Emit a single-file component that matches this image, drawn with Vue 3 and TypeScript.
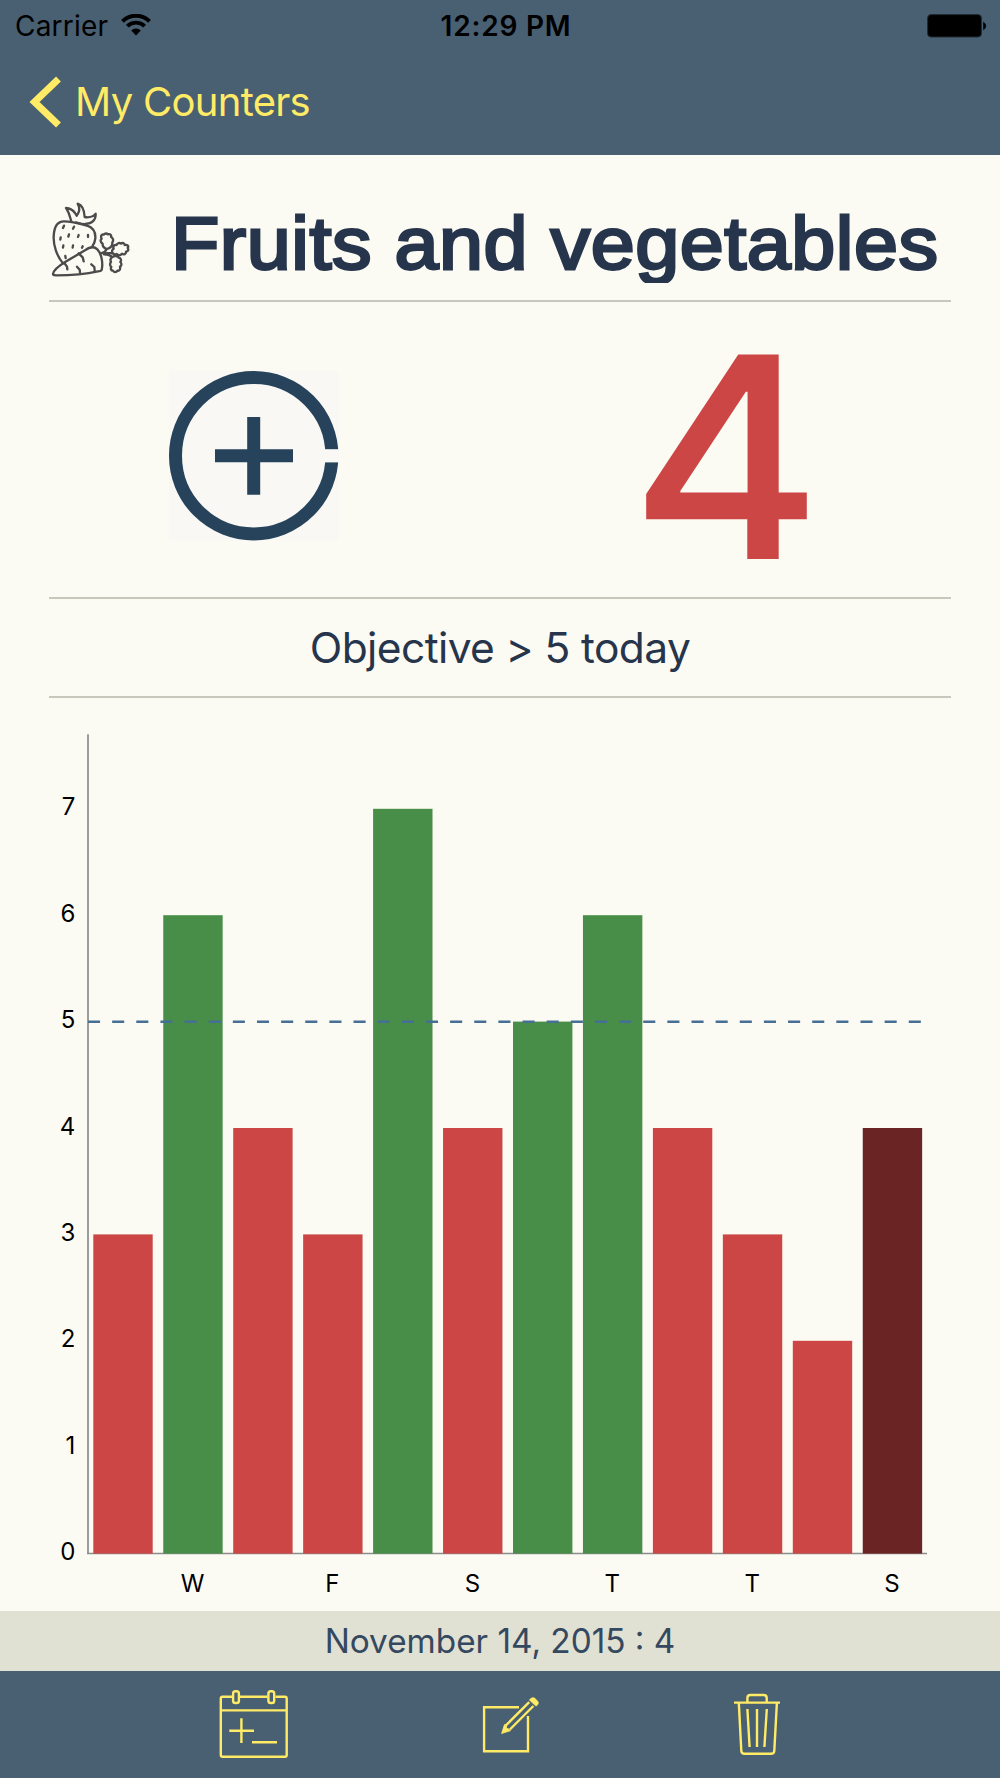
<script setup lang="ts">
interface Day {
  label: string
  value: number
}

const objective = 5

const days: Day[] = [
  { label: '', value: 3 },
  { label: 'W', value: 6 },
  { label: '', value: 4 },
  { label: 'F', value: 3 },
  { label: '', value: 7 },
  { label: 'S', value: 4 },
  { label: '', value: 5 },
  { label: 'T', value: 6 },
  { label: '', value: 4 },
  { label: 'T', value: 3 },
  { label: '', value: 2 },
  { label: 'S', value: 4 },
]

const unit = 106.4
const baseline = 855.3
const pitch = 69.95
const barWidth = 59.4
const firstBar = 93.3

const ticks = [0, 1, 2, 3, 4, 5, 6, 7]

const yOf = (value: number): number => baseline - value * unit
const xOf = (index: number): number => firstBar + index * pitch

function barClass(day: Day, index: number): string {
  if (index === days.length - 1) return 'today'
  return day.value >= objective ? 'reached' : 'missed'
}
</script>

<template>
  <div class="screen">
    <header class="top">
      <div class="status">
        <div class="carrier">
          <span>Carrier</span>
          <svg class="wifi" width="30" height="22" viewBox="0 0 30 22">
            <path d="M1.500 7.300A19.200 19.200 0 0 1 28.500 7.300" fill="none" stroke="#000" stroke-width="4" />
            <path d="M6.300 12.200A12.400 12.400 0 0 1 23.700 12.200" fill="none" stroke="#000" stroke-width="3.800" />
            <path d="M10.200 16.400A7 7 0 0 1 19.800 16.400L15 21.500Z" fill="#000" />
          </svg>
        </div>
        <div class="time">12:29 PM</div>
        <div class="battery-wrap">
          <svg width="60" height="24" viewBox="0 0 60 24">
            <rect x="0.600" y="0.600" width="53.800" height="22.400" rx="3.500" fill="#000" stroke="#202a33" stroke-width="1" />
            <path d="M56.500 8.200A4.300 4.300 0 0 1 56.500 15.800Z" fill="#000" stroke="#000" stroke-width="0.600" />
          </svg>
        </div>
      </div>
      <nav class="nav">
        <svg class="chevron" width="32" height="52" viewBox="0 0 32 52">
          <path d="M29.500 3L5.500 26L29.500 49" fill="none" stroke="#ffeb66" stroke-width="7" />
        </svg>
        <span class="back">My Counters</span>
      </nav>
    </header>

    <main class="content">
      <section class="heading">
        <svg class="produce" width="90" height="90" viewBox="57 24 270 270" fill="none" stroke="#4b4b4b" stroke-width="7" stroke-linecap="round" stroke-linejoin="round">
          <path d="M99 220C80 198 70 165 71 140C72 112 82 94 102 94C127 94 150 101 171 107C190 113 197 129 196 145C195 157 191 163 187 169" />
          <path d="M124 94C119 79 117 66 108 54C119 55 129 60 135 69L140 77C149 66 150 53 143 41C158 46 163 61 164 81C175 83 190 80 197 71C198 91 186 101 166 102C158 103 146 99 138 97" />
          <path d="M69 252C70 242 91 225 109 214L165 181C179 171 193 169 202 178C214 190 220 218 215 240C213 244 210 244 204 244C160 254 112 256 78 256C72 256 69 254 69 252Z" />
          <path d="M146 190L158 202L161 214M103 219L111 230L112 238M141 230L149 239L150 248M184 223L193 231L194 242" />
          <path d="M102 107L99 114M132 110L129 116M92 142L91 149M117 133L115 140M146 135L144 141M174 135L174 141M100 166L99 173M129 166L128 173M158 169L156 173M106 198L107 204" />
          <path d="M213 190C222 188 228 182 231 177C221 174 217 168 218 161C211 157 210 149 215 146C211 138 215 132 221 134C225 129 231 130 234 133C241 131 245 136 243 141C250 144 251 152 247 157C248 166 241 174 231 177M220 190L248 189C244 185 247 178 251 176C248 168 254 163 260 165C262 158 269 158 273 161C277 157 284 160 284 165C293 163 297 169 293 174C297 180 294 185 288 185C288 193 281 195 276 191C272 198 263 196 260 192C256 195 251 193 248 189M222 193C232 193 240 196 247 201C254 197 263 198 266 203C273 204 275 211 271 216C276 221 275 228 270 230C272 238 268 244 262 242C259 248 251 247 249 242C243 242 241 236 244 231C239 227 239 220 243 216C240 210 242 204 247 201" stroke-width="7" />
        </svg>
        <h1 class="title"><span class="title-text">Fruits and vegetables</span></h1>
      </section>

      <section class="counter">
        <button class="add" type="button" aria-label="Add one">
          <svg width="170" height="170" viewBox="0 0 170 170">
            <rect width="169.500" height="169.500" fill="#faf8f4" />
            <circle cx="84.700" cy="84.700" r="78.200" fill="none" stroke="#26435b" stroke-width="13" />
            <rect x="150" y="78.200" width="20" height="13.200" fill="#faf8f4" />
            <path d="M46 84.700H124M84.700 46V123.700" stroke="#26435b" stroke-width="13" />
          </svg>
        </button>
        <div class="count"><span class="count-value">4</span></div>
      </section>

      <section class="objective"><span>Objective &gt; 5 today</span></section>

      <svg class="chart" width="1000" height="913" viewBox="0 0 1000 913">
        <path d="M88 36.300V855.500" stroke="#9c9c9a" stroke-width="2" />
        <path d="M87 855.500H927" stroke="#8c8c8a" stroke-width="1.500" />
        <rect
          v-for="(day, i) in days"
          :key="'bar' + i"
          :class="barClass(day, i)"
          :x="xOf(i)"
          :y="yOf(day.value) + 0.3"
          :width="barWidth"
          :height="day.value * unit"
        />
        <path :d="`M88 ${yOf(objective) + 0.5}H922`" stroke="#456f95" stroke-width="2.500" stroke-dasharray="12.070 12.070" />
        <text v-for="tick in ticks" :key="'tick' + tick" class="label end" x="75.300" :y="yOf(tick) + 6.900">{{ tick }}</text>
        <template v-for="(day, i) in days" :key="'day' + i">
          <text v-if="day.label" class="label middle" :x="xOf(i) + barWidth / 2 - 0.4" y="893.500">{{ day.label }}</text>
        </template>
      </svg>
    </main>

    <div class="selection"><span>November 14, 2015 : 4</span></div>

    <footer class="toolbar">
      <svg width="1000" height="107" viewBox="0 1671 1000 107" fill="none" stroke="#ffeb66" stroke-width="2.400">
        <g>
          <path d="M232 1696.700H222.500Q220.800 1696.700 220.800 1698.400V1755Q220.800 1756.700 222.500 1756.700H285Q286.700 1756.700 286.700 1755V1698.400Q286.700 1696.700 285 1696.700H275.500M240 1696.700H267.500M220.800 1710.400H286.700" />
          <rect x="233.100" y="1691.200" width="5.800" height="11.800" rx="2.300" />
          <rect x="268.400" y="1691.200" width="5.800" height="11.800" rx="2.300" />
          <path d="M229.300 1730.700H254M241.400 1718.300V1743M252 1742.200H277" />
        </g>
        <g>
          <path d="M519 1707.200H484.100V1751.200H528V1716" />
          <path d="M529.200 1702.200L505.600 1725.700M533.400 1706L509.900 1729.500" />
          <path d="M504.500 1724.500L501.600 1733.500L510.500 1730.700L508 1728.500L506.200 1728.500L506.800 1726.600Z" fill="#ffeb66" stroke-width="0.800" />
          <path d="M530.600 1698.600Q532.800 1696.500 535 1698.300L537.600 1700.900Q539.500 1703 537.500 1705L536 1706.300L529.200 1700Z" fill="#ffeb66" stroke-width="0.400" />
        </g>
        <g>
          <path d="M734 1702.600H780M747.400 1702.600V1698Q747.400 1695 750.400 1695H763.700Q766.700 1695 766.700 1698V1702.600" />
          <path d="M738.800 1702.600L741.300 1750.800Q741.600 1753.800 744.600 1753.800H771Q774 1753.800 774.300 1750.800L776.900 1702.600" />
          <path d="M747.400 1709L749.600 1747M757 1709V1747M766.800 1709L764.400 1747" />
        </g>
      </svg>
    </footer>
  </div>
</template>

<style>
body {
  margin: 0;
  background: #fcfbf3;
}
</style>

<style scoped>
.screen {
  width: 1000px;
  height: 1778px;
  display: flex;
  flex-direction: column;
  overflow: hidden;
  background: #fcfbf3;
  font-family: Inter, "Liberation Sans", sans-serif;
  color: #26354b;
}

.top {
  height: 155px;
  flex: none;
  background: #495f72;
}

.status {
  display: grid;
  grid-template-columns: 1fr auto 1fr;
  align-items: center;
  height: 50px;
  padding: 0 13px 0 15px;
  color: #000;
  font-size: 28px;
  line-height: 52px;
}

.carrier {
  display: flex;
  align-items: center;
  gap: 13px;
  letter-spacing: 0.2px;
}

.wifi {
  margin-bottom: 3px;
}

.time {
  font-weight: 600;
  letter-spacing: 0.8px;
  padding-left: 10px;
}

.battery-wrap {
  display: flex;
  justify-content: flex-end;
}

.nav {
  display: flex;
  align-items: center;
  height: 103px;
  padding-left: 29px;
  gap: 14px;
}

.back {
  color: #ffeb66;
  font-size: 40px;
  letter-spacing: -0.7px;
}

.content {
  flex: none;
  height: 1456px;
}

.heading {
  display: flex;
  box-sizing: border-box;
  height: 147px;
  margin: 0 49px;
  padding-top: 43px;
  border-bottom: 2px solid #c8c7bb;
}

.produce {
  flex: none;
}

.title {
  flex: none;
  width: 790px;
  height: 84.6px;
  margin: 0 0 0 25.5px;
  padding: 0 6px;
  overflow: hidden;
  font: 400 75px/90px "Liberation Sans", Arial, sans-serif;
  letter-spacing: 0.5px;
  -webkit-text-stroke: 2.8px #26354b;
  white-space: nowrap;
}

.title-text {
  display: inline-block;
  transform: scaleX(1.055);
  transform-origin: left;
}

.counter {
  display: flex;
  box-sizing: border-box;
  height: 297px;
  margin: 0 49px;
  border-bottom: 2px solid #c8c7bb;
}

.add {
  width: 170px;
  height: 170px;
  margin: 69px 0 0 120px;
  padding: 0;
  border: 0;
  background: none;
}

.add svg {
  display: block;
}

.count {
  display: flex;
  justify-content: center;
  width: 300px;
  margin-left: 237px;
  color: #cc4646;
  font-size: 281px;
  font-weight: 500;
  line-height: 311px;
}

.count-value {
  display: block;
  transform: scaleX(1.045);
}

.objective {
  display: flex;
  align-items: center;
  justify-content: center;
  box-sizing: border-box;
  height: 99px;
  margin: 0 49px;
  border-bottom: 2px solid #c8c7bb;
  font-size: 42.5px;
  letter-spacing: -0.6px;
}

.chart {
  display: block;
}

.missed {
  fill: #cc4646;
}

.reached {
  fill: #488d48;
}

.today {
  fill: #6b2424;
}

.label {
  fill: #000;
  font-size: 24px;
}

.end {
  text-anchor: end;
}

.middle {
  text-anchor: middle;
}

.selection {
  display: flex;
  align-items: center;
  justify-content: center;
  flex: none;
  height: 60px;
  background: #e0e0d3;
  color: #34495f;
  font-size: 33.3px;
}

.toolbar {
  flex: none;
  height: 107px;
  background: #495f72;
}

.toolbar svg {
  display: block;
}
</style>
